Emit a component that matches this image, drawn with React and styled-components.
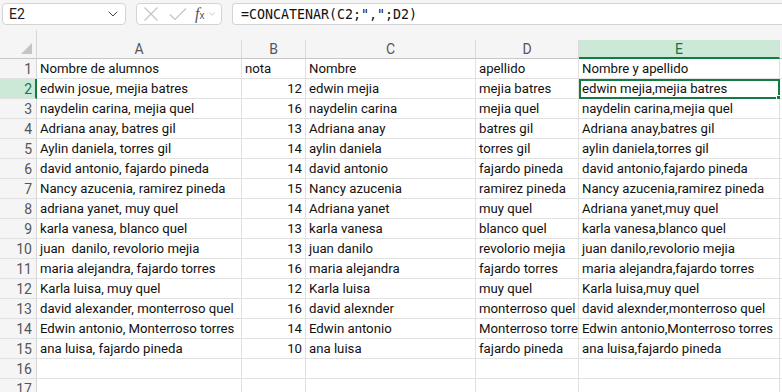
import React from 'react';
import styled, { createGlobalStyle } from 'styled-components';
import { ChevronDown } from 'lucide-react';

const GlobalStyle = createGlobalStyle`
  html, body {
    margin: 0;
    padding: 0;
    background: #f5f5f5;
    overflow: hidden;
  }
  * { box-sizing: border-box; }
`;

const Page = styled.div`
  width: 782px;
  height: 392px;
  background: #f5f5f5;
  font-family: Roboto, "Liberation Sans", sans-serif;
  overflow: hidden;
`;

// barra de formulas
const FormulaBar = styled.div`
  height: 30px;
  display: flex;
  align-items: flex-start;
  padding: 3px 0 0 2px;
  gap: 10px;
`;

const Box = styled.div`
  height: 22px;
  background: #fff;
  border: 1px solid #d4d4d4;
  border-radius: 4px;
  display: flex;
  align-items: center;
`;

const NameBox = styled(Box)`
  width: 124px;
  padding: 0 4px 0 6px;
  justify-content: space-between;
  font-size: 14px;
  color: #222;
`;

const ActionBox = styled(Box)`
  width: 86px;
  padding: 0 4px 0 6px;
  gap: 10px;
`;

const Icon = styled.svg`
  flex: none;
  stroke: #c4c4c4;
  stroke-width: 1.2;
  fill: none;
`;

const Fx = styled.span`
  font-family: "Liberation Serif", serif;
  font-style: italic;
  font-size: 16px;
  color: #555;
  display: flex;
  align-items: baseline;
  margin-left: -2px;
  sub { font-size: 10px; font-style: normal; font-family: "Liberation Sans", sans-serif; }
`;

const SmallChevron = styled(ChevronDown)`
  flex: none;
  margin-left: -7px;
  color: #aaa;
`;

const FormulaInput = styled(Box)`
  flex: 1;
  border-right: none;
  border-radius: 4px 0 0 4px;
  padding-left: 8px;
  font-family: "DejaVu Sans Mono", "Liberation Mono", monospace;
  font-size: 13.3px;
  color: #111;
`;

// hoja
const Sheet = styled.div`
  position: relative;
  display: grid;
  grid-template-columns: 37px 205px 64px 170px 103px 201px 1fr;
  grid-template-rows: 10px 19px repeat(17, 20px);
`;

const Corner = styled.div`
  grid-row: 1 / span 2;
  grid-column: 1;
  background: #f5f5f5;
  border-right: 1px solid #d6d6d6;
  border-bottom: 1px solid #c6c6c6;
  position: relative;
  &:after {
    content: "";
    position: absolute;
    right: 4px;
    bottom: 4px;
    width: 0;
    height: 0;
    border-left: 11px solid transparent;
    border-bottom: 11px solid #c4c4c4;
  }
`;

const Spacer = styled.div`
  grid-row: 1;
  grid-column: 2 / -1;
`;

const ColHead = styled.div`
  background: ${p => (p.$active ? '#cbe9d6' : '#f5f5f5')};
  color: ${p => (p.$active ? '#1a7343' : '#555')};
  border-right: 1px solid #dadada;
  border-bottom: ${p => (p.$active ? '2px solid #137c43' : '1px solid #c6c6c6')};
  font-size: 14px;
  display: flex;
  align-items: center;
  justify-content: center;
  padding-top: ${p => (p.$active ? '1px' : '0')};
`;

const RowHead = styled.div`
  background: ${p => (p.$active ? '#cbe9d6' : '#f5f5f5')};
  color: ${p => (p.$active ? '#1a7343' : '#555')};
  border-right: ${p => (p.$active ? '2px solid #137c43' : '1px solid #d6d6d6')};
  border-bottom: 1px solid #e0e0e0;
  font-size: 14px;
  display: flex;
  align-items: center;
  justify-content: flex-end;
  padding-right: ${p => (p.$active ? '3px' : '4px')};
`;

const Cell = styled.div`
  background: #fff;
  border-right: 1px solid #e1e1e1;
  border-bottom: 1px solid #e1e1e1;
  font-size: 13.2px;
  color: #111;
  white-space: pre;
  overflow: hidden;
  display: flex;
  align-items: center;
  justify-content: ${p => (p.$num ? 'flex-end' : 'flex-start')};
  padding: 0 3px;
  position: relative;
  ${p => p.$selected && `
    outline: 2px solid #137c43;
    outline-offset: -2px;
    overflow: visible;
  `}
`;

const FillHandle = styled.span`
  position: absolute;
  right: -3px;
  bottom: -3px;
  width: 6px;
  height: 6px;
  background: #137c43;
  border: 1px solid #fff;
`;

const Scribble = styled.svg`
  position: absolute;
  left: 734px;
  top: 367px;
  width: 14px;
  height: 12px;
`;

const data = [
  ['Nombre de alumnos', 'nota', 'Nombre', 'apellido', 'Nombre y apellido'],
  ['edwin josue, mejia batres', '12', 'edwin mejia', 'mejia batres', 'edwin mejia,mejia batres'],
  ['naydelin carina, mejia quel', '16', 'naydelin carina', 'mejia quel', 'naydelin carina,mejia quel'],
  ['Adriana anay, batres gil', '13', 'Adriana anay', 'batres gil', 'Adriana anay,batres gil'],
  ['Aylin daniela, torres gil', '14', 'aylin daniela', 'torres gil', 'aylin daniela,torres gil'],
  ['david antonio, fajardo pineda', '14', 'david antonio', 'fajardo pineda', 'david antonio,fajardo pineda'],
  ['Nancy azucenia, ramirez pineda', '15', 'Nancy azucenia', 'ramirez pineda', 'Nancy azucenia,ramirez pineda'],
  ['adriana yanet, muy quel', '14', 'Adriana yanet', 'muy quel', 'Adriana yanet,muy quel'],
  ['karla vanesa, blanco quel', '13', 'karla vanesa', 'blanco quel', 'karla vanesa,blanco quel'],
  ['juan  danilo, revolorio mejia', '13', 'juan danilo', 'revolorio mejia', 'juan danilo,revolorio mejia'],
  ['maria alejandra, fajardo torres', '16', 'maria alejandra', 'fajardo torres', 'maria alejandra,fajardo torres'],
  ['Karla luisa, muy quel', '12', 'Karla luisa', 'muy quel', 'Karla luisa,muy quel'],
  ['david alexander, monterroso quel', '16', 'david alexnder', 'monterroso quel', 'david alexnder,monterroso quel'],
  ['Edwin antonio, Monterroso torres', '14', 'Edwin antonio', 'Monterroso torres', 'Edwin antonio,Monterroso torres'],
  ['ana luisa, fajardo pineda', '10', 'ana luisa', 'fajardo pineda', 'ana luisa,fajardo pineda'],
  ['', '', '', '', ''],
  ['', '', '', '', ''],
];

const cols = ['A', 'B', 'C', 'D', 'E', ''];

export default function App() {
  return (
    <Page>
      <GlobalStyle />
      <FormulaBar>
        <NameBox>
          <span>E2</span>
          <ChevronDown size={16} color="#444" strokeWidth={1.5} />
        </NameBox>
        <ActionBox>
          <Icon width="16" height="16" viewBox="0 0 16 16">
            <path d="M1.5 1.5 L14.5 14.5 M14.5 1.5 L1.5 14.5" />
          </Icon>
          <Icon width="18" height="14" viewBox="0 0 18 14">
            <path d="M1 7.5 L6 12.5 L17 1.5" />
          </Icon>
          <Fx>f<sub>x</sub></Fx>
          <SmallChevron size={10} strokeWidth={1.5} />
        </ActionBox>
        <FormulaInput>=CONCATENAR(C2;",";D2)</FormulaInput>
      </FormulaBar>
      <Sheet>
        <Corner />
        <Spacer />
        {cols.map((c, i) => (
          <ColHead key={i} $active={c === 'E'}>{c}</ColHead>
        ))}
        {data.map((row, r) => (
          <React.Fragment key={r}>
            <RowHead $active={r === 1}>{r + 1}</RowHead>
            {row.map((v, c) => (
              <Cell key={c} $num={c === 1 && r > 0} $selected={r === 1 && c === 4}>
                {v}
                {r === 1 && c === 4 && <FillHandle />}
              </Cell>
            ))}
            <Cell />
          </React.Fragment>
        ))}
        <Scribble viewBox="0 0 14 12">
          <path d="M2 10 C4 10 6 9 7 8 M9 5 L11 3" stroke="#1a1ae0" strokeWidth="2" fill="none" strokeLinecap="round" />
        </Scribble>
      </Sheet>
    </Page>
  );
}
